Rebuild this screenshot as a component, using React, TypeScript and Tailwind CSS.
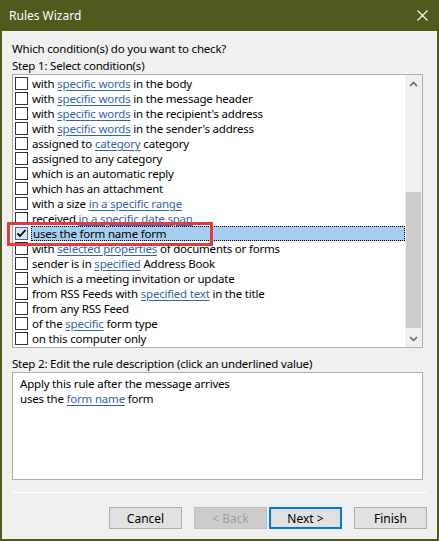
import React from 'react';

type Part = string | { link: string };

const conditions: Part[][] = [
  ['with ', { link: 'specific words' }, ' in the body'],
  ['with ', { link: 'specific words' }, ' in the message header'],
  ['with ', { link: 'specific words' }, " in the recipient's address"],
  ['with ', { link: 'specific words' }, " in the sender's address"],
  ['assigned to ', { link: 'category' }, ' category'],
  ['assigned to any category'],
  ['which is an automatic reply'],
  ['which has an attachment'],
  ['with a size ', { link: 'in a specific range' }],
  ['received ', { link: 'in a specific date span' }],
  ['uses the form name form'],
  ['with ', { link: 'selected properties' }, ' of documents or forms'],
  ['sender is in ', { link: 'specified' }, ' Address Book'],
  ['which is a meeting invitation or update'],
  ['from RSS Feeds with ', { link: 'specified text' }, ' in the title'],
  ['from any RSS Feed'],
  ['of the ', { link: 'specific' }, ' form type'],
  ['on this computer only'],
];

const SELECTED = 10;

function Text({ parts }: { parts: Part[] }) {
  return (
    <>
      {parts.map((p, i) =>
        typeof p === 'string' ? (
          <span key={i}>{p}</span>
        ) : (
          <span key={i} className="text-[#3463ad] underline underline-offset-[2px] decoration-[#3463ad]">
            {p.link}
          </span>
        )
      )}
    </>
  );
}

function Checkbox({ checked }: { checked?: boolean }) {
  return (
    <div
      className={
        'w-[13px] h-[13px] shrink-0 border flex items-center justify-center ' +
        (checked ? 'border-[#3c6c9c] bg-[#dbe9f6]' : 'border-[#333333] bg-white')
      }
    >
      {checked && (
        <svg width="11" height="11" viewBox="0 0 11 11">
          <path d="M1.5 5.5 L4 8 L9.5 2" fill="none" stroke="#000" strokeWidth="1.8" />
        </svg>
      )}
    </div>
  );
}

function Button({ label, disabled, primary }: { label: string; disabled?: boolean; primary?: boolean }) {
  return (
    <div
      className={
        'w-[73px] h-[22px] flex items-center justify-center ' +
        (disabled
          ? 'bg-[#cccccc] border border-[#bfbfbf] text-[#a0a0a0]'
          : primary
            ? 'bg-[#e1e1e1] border-2 border-[#0078d7] text-black'
            : 'bg-[#e1e1e1] border border-[#adadad] text-black')
      }
    >
      {label}
    </div>
  );
}

export default function App() {
  return (
    <div
      className="w-[439px] h-[541px] bg-[#f0f0f0] border-2 border-t-0 border-[#4f5a1c] flex flex-col text-[11.5px] tracking-[-0.2px] leading-[15px] text-black"
      style={{ fontFamily: '"Noto Sans", "Open Sans", sans-serif' }}
    >
      {/* Title bar */}
      <div className="h-[31px] -mx-[2px] bg-[#4f5a1c] flex items-center justify-between pl-[9px] pr-[11px] text-white">
        <span className="text-[12px] tracking-normal">Rules Wizard</span>
        <svg width="11" height="11" viewBox="0 0 11 11">
          <path d="M0.5 0.5 L10.5 10.5 M10.5 0.5 L0.5 10.5" stroke="#fff" strokeWidth="1.1" />
        </svg>
      </div>

      <div className="flex flex-col pl-[10px] pr-[10px] pt-[10px]">
        <div className="h-[15px]">Which condition(s) do you want to check?</div>
        <div className="h-[15px] mt-[2px]">Step 1: Select condition(s)</div>

        {/* Conditions list */}
        <div className="relative mt-[1px] w-[411px] h-[274px] bg-white border border-[#adadad] flex">
          <div className="flex-1 flex flex-col pt-[1px] pl-[2px]">
            {conditions.map((c, i) => (
              <div key={i} className="h-[15px] flex items-center gap-[4px] whitespace-nowrap">
                <Checkbox checked={i === SELECTED} />
                {i === SELECTED ? (
                  <div className="flex-1 h-[15px] -ml-[1px] pl-[1px] bg-[#a6cef0] border border-dotted border-black leading-[13px]">
                    <Text parts={c} />
                  </div>
                ) : (
                  <div className="h-[15px]">
                    <Text parts={c} />
                  </div>
                )}
              </div>
            ))}
          </div>

          {/* Scrollbar */}
          <div className="w-[17px] bg-[#f0f0f0] flex flex-col items-center">
            <div className="h-[17px] w-full flex items-center justify-center">
              <svg width="9" height="6" viewBox="0 0 9 6">
                <path d="M1 5 L4.5 1.5 L8 5" fill="none" stroke="#606060" strokeWidth="1.5" />
              </svg>
            </div>
            <div className="mt-[100px] w-[15px] h-[136px] bg-[#cdcdcd]" />
            <div className="flex-1" />
            <div className="h-[17px] w-full flex items-center justify-center">
              <svg width="9" height="6" viewBox="0 0 9 6">
                <path d="M1 1 L4.5 4.5 L8 1" fill="none" stroke="#606060" strokeWidth="1.5" />
              </svg>
            </div>
          </div>

          {/* Annotation highlight */}
          <div className="absolute left-[-6px] top-[147px] w-[206px] h-[24px] border-[3px] border-[#e8393f] pointer-events-none" />
        </div>

        <div className="h-[15px] mt-[8px]">Step 2: Edit the rule description (click an underlined value)</div>
        <div className="mt-[1px] w-[411px] h-[108px] bg-white border border-[#adadad] pl-[7px] pt-[3px]">
          <div className="h-[15px]">Apply this rule after the message arrives</div>
          <div className="h-[15px]">
            uses the{' '}
            <span className="text-[#3463ad] underline underline-offset-[2px]">form name</span> form
          </div>
        </div>

        <div className="mt-[12px] w-[415px] h-[1px] bg-[#a0a0a0] border-b border-white" />

        <div className="mt-[14px] w-[415px] flex justify-end gap-[12px] text-[12px] tracking-normal">
          <Button label="Cancel" />
          <div className="flex gap-[2px]">
            <Button label="< Back" disabled />
            <Button label="Next >" primary />
          </div>
          <Button label="Finish" />
        </div>
      </div>
    </div>
  );
}
